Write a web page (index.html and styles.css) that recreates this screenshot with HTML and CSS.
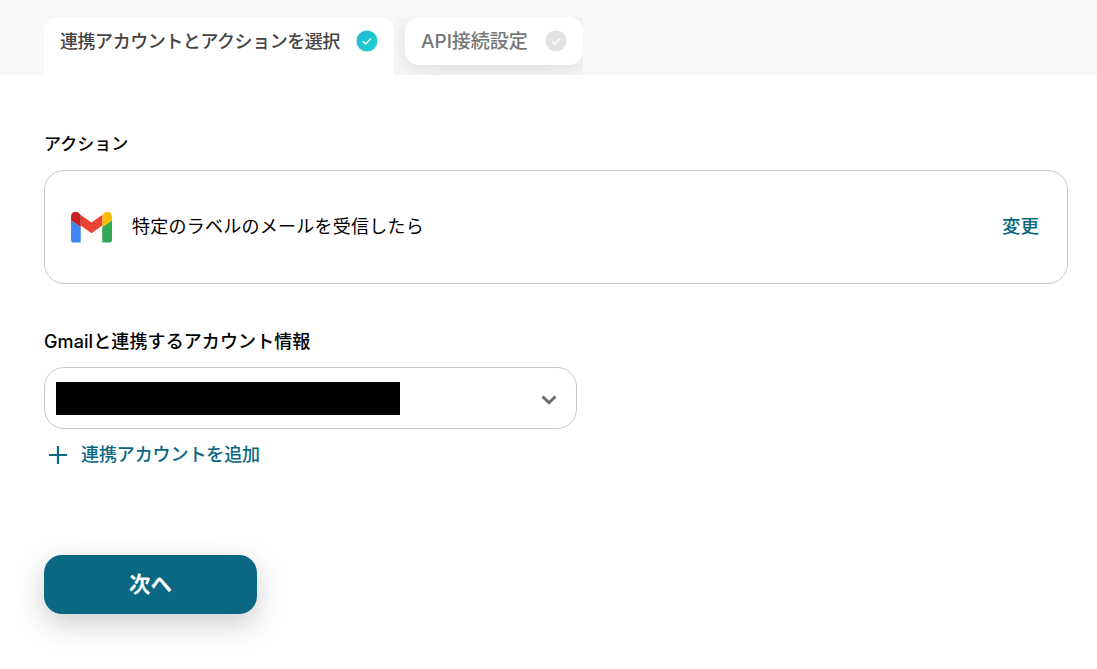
FILE: index.html
```html
<!DOCTYPE html>
<html lang="ja">
<head>
    <meta charset="UTF-8">
    <title>連携アカウントとアクションを選択</title>
    <link rel="stylesheet" href="styles.css">
</head>
<body>
    <div class="tabbar">
        <div class="tab tabActive">
            <span class="tabText">連携アカウントとアクションを選択</span>
            <svg class="tabCheck" viewBox="0 0 22 22">
                <defs>
                    <linearGradient id="checkGrad" x1="0" y1="0" x2="1" y2="1">
                        <stop offset="0" stop-color="#1fb4d8"/>
                        <stop offset="1" stop-color="#20d4cc"/>
                    </linearGradient>
                </defs>
                <circle cx="11" cy="11" r="10.5" fill="url(#checkGrad)"/>
                <path d="M6.8 11.2l2.9 2.9 5.3-5.6" fill="none" stroke="#fff" stroke-width="1.4"/>
            </svg>
        </div>
        <div class="tabClip">
            <div class="tab tabIdle">
                <span class="tabText">API接続設定</span>
                <svg class="tabCheck" viewBox="0 0 22 22">
                    <circle cx="11" cy="11" r="10.5" fill="#e2e2e2"/>
                    <path d="M6.8 11.2l2.9 2.9 5.3-5.6" fill="none" stroke="#fff" stroke-width="1.4"/>
                </svg>
            </div>
        </div>
    </div>

    <main class="content">
        <h2 class="label labelAction">アクション</h2>
        <div class="actionCard">
            <svg class="gmail" viewBox="0 0 42 32">
                <path d="M3 32h7V16L0 9v20a3 3 0 0 0 3 3z" fill="#4285f4"/>
                <path d="M32 32h7a3 3 0 0 0 3-3V9l-10 7z" fill="#34a853"/>
                <path d="M32 3.800V16L42 9V5c0-3.900-4.400-6.100-7.500-3.800z" fill="#fbbc04"/>
                <path d="M10 16V3.800L21 11.500l11-7.700V14.500L21 22.500 10 14.500z" fill="#ea4335"/>
                <path d="M0 5v4l10 7V3.800L7.500 1.200C4.400-1.100 0 1.100 0 5z" fill="#c5221f"/>
            </svg>
            <span class="actionName">特定のラベルのメールを受信したら</span>
            <a class="changeLink">変更</a>
        </div>

        <h2 class="label labelAccount">Gmailと連携するアカウント情報</h2>
        <div class="selectBox">
            <div class="redact"></div>
            <svg class="chevron" viewBox="0 0 14 9">
                <path d="M1.200 1.300L7 7l5.800-5.700" fill="none" stroke="#6b6b6b" stroke-width="2.600"/>
            </svg>
        </div>
        <a class="addLink">
            <svg class="plus" viewBox="0 0 18 18">
                <path d="M9 0v18M0 9h18" fill="none" stroke="#0a6882" stroke-width="2.200"/>
            </svg>
            <span>連携アカウントを追加</span>
        </a>

        <button class="nextBtn">次へ</button>
    </main>
</body>
</html>
```

FILE: styles.css
```css
*{box-sizing: border-box;}
body{margin: 0;background: #fff;color: #000;font-family: Inter, "Noto Sans CJK JP", sans-serif;}
.tabbar{height: 75px;background: #f8f8f8;padding: 17px 0 0 44px;display: flex;align-items: flex-start;}
.tab{display: flex;align-items: center;background: #fff;font-size: 18px;font-weight: 500;}
.tabText{margin-top: -3px;}
.tabActive{width: 350px;height: 58px;padding: 0 16px 10px 16px;justify-content: space-between;border-radius: 14px 14px 0 0;color: #444;letter-spacing: -.45px;}
.tabClip{width: 189px;height: 58px;padding-left: 11px;overflow: hidden;}
.tabIdle{width: 178px;height: 48px;padding: 0 16px;justify-content: space-between;border-radius: 14px;color: #777;font-size: 19px;box-shadow: 0 4px 24px rgba(0,0,0,.12);}
.tabCheck{width: 22px;height: 22px;}
.content{padding: 0 29px 55px 44px;}
.label{margin: 0;font-size: 18px;font-weight: 500;line-height: 26px;}
.labelAction{padding-top: 56px;font-size: 17px;}
.labelAccount{margin-top: 45px;letter-spacing: .1px;}
.actionCard{display: flex;align-items: center;height: 114px;margin-top: 13px;padding: 0 28px 0 26px;border: 1px solid #c8c8c8;border-radius: 20px;}
.gmail{width: 41px;height: 32px;margin-right: 20px;}
.actionName{flex: 1;margin-top: -5px;font-size: 18px;letter-spacing: .25px;}
.changeLink{margin-top: -5px;color: #0a6882;font-size: 18.5px;font-weight: 500;}
.selectBox{display: flex;align-items: center;justify-content: space-between;width: 533px;height: 62px;margin-top: 12px;padding: 0 20px 0 11px;border: 1px solid #c8c8c8;border-radius: 20px;}
.redact{width: 344px;height: 33px;background: #000;}
.chevron{width: 16px;height: 10px;margin: 4px -1px 0 0;}
.addLink{display: flex;align-items: center;gap: 14px;margin-top: 13px;padding-left: 5px;color: #0a6882;font-size: 18px;font-weight: 500;line-height: 26px;letter-spacing: -.1px;}
.plus{width: 18px;height: 18px;margin-top: -1px;}
.nextBtn{display: block;width: 213px;height: 59px;margin-top: 87px;padding-bottom: 5px;border: 0;border-radius: 18px;background: #0a6882;color: #fff;font-family: inherit;font-size: 21.5px;font-weight: 700;box-shadow: 0 10px 30px rgba(0,0,0,.2);}
```
